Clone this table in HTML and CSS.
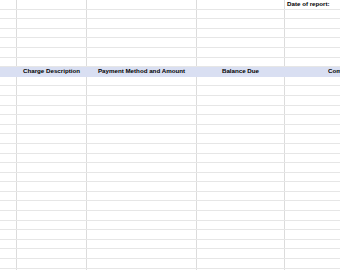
FILE: index.html
```html
<!DOCTYPE html>
<html>
<head>
<meta charset="utf-8">
<link rel="stylesheet" href="styles.css">
</head>
<body>
<div class="sheet">
  <div class="row"><div class="c c0"></div><div class="c c1"></div><div class="c c2"></div><div class="c c3"></div><div class="c c4 label">Date of report:</div></div>
  <div class="row"><div class="c c0"></div><div class="c c1"></div><div class="c c2"></div><div class="c c3"></div><div class="c c4"></div></div>
  <div class="row"><div class="c c0"></div><div class="c c1"></div><div class="c c2"></div><div class="c c3"></div><div class="c c4"></div></div>
  <div class="row"><div class="c c0"></div><div class="c c1"></div><div class="c c2"></div><div class="c c3"></div><div class="c c4"></div></div>
  <div class="row"><div class="c c0"></div><div class="c c1"></div><div class="c c2"></div><div class="c c3"></div><div class="c c4"></div></div>
  <div class="row"><div class="c c0"></div><div class="c c1"></div><div class="c c2"></div><div class="c c3"></div><div class="c c4"></div></div>
  <div class="row"><div class="c c0"></div><div class="c c1"></div><div class="c c2"></div><div class="c c3"></div><div class="c c4"></div></div>
  <div class="row head"><div class="c c0"></div><div class="c c1">Charge Description</div><div class="c c2">Payment Method and Amount</div><div class="c c3">Balance Due</div><div class="c c4">Comments</div></div>
  <div class="row"><div class="c c0"></div><div class="c c1"></div><div class="c c2"></div><div class="c c3"></div><div class="c c4"></div></div>
  <div class="row"><div class="c c0"></div><div class="c c1"></div><div class="c c2"></div><div class="c c3"></div><div class="c c4"></div></div>
  <div class="row"><div class="c c0"></div><div class="c c1"></div><div class="c c2"></div><div class="c c3"></div><div class="c c4"></div></div>
  <div class="row"><div class="c c0"></div><div class="c c1"></div><div class="c c2"></div><div class="c c3"></div><div class="c c4"></div></div>
  <div class="row"><div class="c c0"></div><div class="c c1"></div><div class="c c2"></div><div class="c c3"></div><div class="c c4"></div></div>
  <div class="row"><div class="c c0"></div><div class="c c1"></div><div class="c c2"></div><div class="c c3"></div><div class="c c4"></div></div>
  <div class="row"><div class="c c0"></div><div class="c c1"></div><div class="c c2"></div><div class="c c3"></div><div class="c c4"></div></div>
  <div class="row"><div class="c c0"></div><div class="c c1"></div><div class="c c2"></div><div class="c c3"></div><div class="c c4"></div></div>
  <div class="row"><div class="c c0"></div><div class="c c1"></div><div class="c c2"></div><div class="c c3"></div><div class="c c4"></div></div>
  <div class="row"><div class="c c0"></div><div class="c c1"></div><div class="c c2"></div><div class="c c3"></div><div class="c c4"></div></div>
  <div class="row"><div class="c c0"></div><div class="c c1"></div><div class="c c2"></div><div class="c c3"></div><div class="c c4"></div></div>
  <div class="row"><div class="c c0"></div><div class="c c1"></div><div class="c c2"></div><div class="c c3"></div><div class="c c4"></div></div>
  <div class="row"><div class="c c0"></div><div class="c c1"></div><div class="c c2"></div><div class="c c3"></div><div class="c c4"></div></div>
  <div class="row"><div class="c c0"></div><div class="c c1"></div><div class="c c2"></div><div class="c c3"></div><div class="c c4"></div></div>
  <div class="row"><div class="c c0"></div><div class="c c1"></div><div class="c c2"></div><div class="c c3"></div><div class="c c4"></div></div>
  <div class="row"><div class="c c0"></div><div class="c c1"></div><div class="c c2"></div><div class="c c3"></div><div class="c c4"></div></div>
  <div class="row"><div class="c c0"></div><div class="c c1"></div><div class="c c2"></div><div class="c c3"></div><div class="c c4"></div></div>
  <div class="row"><div class="c c0"></div><div class="c c1"></div><div class="c c2"></div><div class="c c3"></div><div class="c c4"></div></div>
  <div class="row"><div class="c c0"></div><div class="c c1"></div><div class="c c2"></div><div class="c c3"></div><div class="c c4"></div></div>
  <div class="row"><div class="c c0"></div><div class="c c1"></div><div class="c c2"></div><div class="c c3"></div><div class="c c4"></div></div>
  <div class="row"><div class="c c0"></div><div class="c c1"></div><div class="c c2"></div><div class="c c3"></div><div class="c c4"></div></div>
</div>
</body>
</html>
```
FILE: styles.css
```css
html, body {
  margin: 0;
  padding: 0;
  background: #ffffff;
  overflow: hidden;
}
.sheet {
  width: 340px;
  height: 270px;
  overflow: hidden;
  font-family: "Liberation Sans", Arial, sans-serif;
  font-size: 6.2px;
  font-weight: bold;
  color: #000;
}
.row {
  display: flex;
  height: 9.6px;
  box-sizing: border-box;
  border-bottom: 1px solid #e6e6e6;
}
.c {
  flex: none;
  box-sizing: border-box;
  height: 100%;
  border-right: 1px solid #dcdcdc;
  line-height: 8.6px;
  white-space: nowrap;
  text-align: center;
  overflow: visible;
}
.c0 { width: 17px; }
.c1 { width: 70px; }
.c2 { width: 110px; }
.c3 { width: 88px; }
.c4 { width: 118px; border-right: none; }
.label { text-align: left; padding-left: 2px; }
.head {
  background: #d9dff2;
  border-bottom-color: #d9dff2;
}
.head .c { border-right-color: #d9dff2; }
```
